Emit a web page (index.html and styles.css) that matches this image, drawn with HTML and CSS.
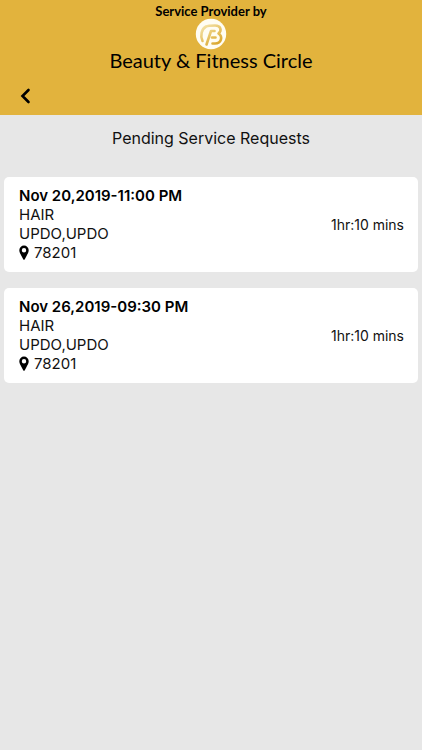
FILE: index.html
```html
<!DOCTYPE html>
<html lang="en">
<head>
<meta charset="utf-8">
<meta name="viewport" content="width=device-width, initial-scale=1">
<title>Pending Service Requests</title>
<link rel="stylesheet" href="styles.css">
</head>
<body>
<header class="header">
  <p class="tagline">Service Provider by</p>
  <svg class="logo" viewBox="0 0 32 32" aria-hidden="true">
    <defs>
      <linearGradient id="gold" gradientUnits="userSpaceOnUse" x1="8" y1="4" x2="22" y2="26">
        <stop offset="0" stop-color="#f8ebb8"/>
        <stop offset="1" stop-color="#dba930"/>
      </linearGradient>
    </defs>
    <circle cx="16" cy="16" r="15.200" fill="#fffdf2"/>
    <g fill="none" stroke="url(#gold)" stroke-width="2.600" stroke-linecap="round" stroke-linejoin="round">
      <path d="M7.500 23C5 18 6.500 11 11 8.500C13 7.500 15 7.500 20 7.500C26 7.500 27 12.500 23.500 15.500C28 18.500 26.500 25.500 20 25.500H17.500"/>
      <path d="M11.500 26.500L16 13H19.500M17 19.500H20.500"/>
    </g>
  </svg>
  <p class="brand">Beauty &amp; Fitness Circle</p>
  <button class="back" type="button" aria-label="Back">
    <svg class="back-icon" viewBox="0 0 12 18" aria-hidden="true"><path d="M8.500 3L2.500 9L8.500 15" fill="none" stroke="#000" stroke-width="2.600" stroke-linecap="round" stroke-linejoin="miter"/></svg>
  </button>
</header>
<main class="content">
  <h1 class="title">Pending Service Requests</h1>
  <ul class="requests">
    <li class="card">
      <div class="details">
        <h2 class="date">Nov 20,2019-11:00 PM</h2>
        <p>HAIR</p>
        <p>UPDO,UPDO</p>
        <p class="place"><svg class="pin" viewBox="0 0 10 15" aria-hidden="true"><path fill-rule="evenodd" d="M5 0.500A4.700 4.700 0 0 0 0.300 5.200C0.300 7.500 1.500 9 2.500 11L4.200 14.200Q5 15.200 5.800 14.200L7.500 11C8.500 9 9.700 7.500 9.700 5.200A4.700 4.700 0 0 0 5 0.500ZM5 3A2.200 2.200 0 1 1 5 7.400A2.200 2.200 0 0 1 5 3Z"/></svg>78201</p>
      </div>
      <p class="duration">1hr:10 mins</p>
    </li>
    <li class="card">
      <div class="details">
        <h2 class="date">Nov 26,2019-09:30 PM</h2>
        <p>HAIR</p>
        <p>UPDO,UPDO</p>
        <p class="place"><svg class="pin" viewBox="0 0 10 15" aria-hidden="true"><path fill-rule="evenodd" d="M5 0.500A4.700 4.700 0 0 0 0.300 5.200C0.300 7.500 1.500 9 2.500 11L4.200 14.200Q5 15.200 5.800 14.200L7.500 11C8.500 9 9.700 7.500 9.700 5.200A4.700 4.700 0 0 0 5 0.500ZM5 3A2.200 2.200 0 1 1 5 7.400A2.200 2.200 0 0 1 5 3Z"/></svg>78201</p>
      </div>
      <p class="duration">1hr:10 mins</p>
    </li>
  </ul>
</main>
</body>
</html>
```
FILE: styles.css
```css
* {
  box-sizing: border-box;
}

body,
h1,
h2,
p,
ul {
  margin: 0;
  padding: 0;
}

body {
  min-height: 100vh;
  background: #e7e7e7;
  color: #111;
  font-family: Inter, "Liberation Sans", sans-serif;
  font-size: 15px;
  line-height: 19px;
}

.header {
  display: flex;
  flex-direction: column;
  align-items: center;
  padding: 4px 16px 7px;
  background: #e2b33d;
  color: #000;
}

.tagline {
  font-family: Lato, sans-serif;
  font-size: 13px;
  font-weight: 700;
  line-height: 14px;
}

.logo {
  width: 32px;
  height: 32px;
}

.brand {
  font-family: Lato, sans-serif;
  font-size: 20px;
  line-height: 20px;
}

.back {
  display: flex;
  align-self: flex-start;
  align-items: center;
  width: 32px;
  height: 24px;
  margin-top: 14px;
  padding: 0 4px;
  border: 0;
  background: none;
}

.back-icon {
  width: 12px;
  height: 18px;
}

.content {
  padding: 11px 4px;
}

.title {
  font-size: 16px;
  font-weight: 400;
  line-height: 24px;
  text-align: center;
}

.requests {
  display: flex;
  flex-direction: column;
  gap: 16px;
  margin-top: 27px;
  list-style: none;
}

.card {
  display: flex;
  align-items: center;
  justify-content: space-between;
  padding: 9px 14px 10px 15px;
  border-radius: 5px;
  background: #fff;
}

.date {
  color: #000;
  font-size: 15px;
  font-weight: 600;
}

.place {
  display: flex;
  align-items: center;
  gap: 5px;
}

.pin {
  width: 10px;
  height: 15px;
}

.duration {
  font-size: 14px;
}
```
